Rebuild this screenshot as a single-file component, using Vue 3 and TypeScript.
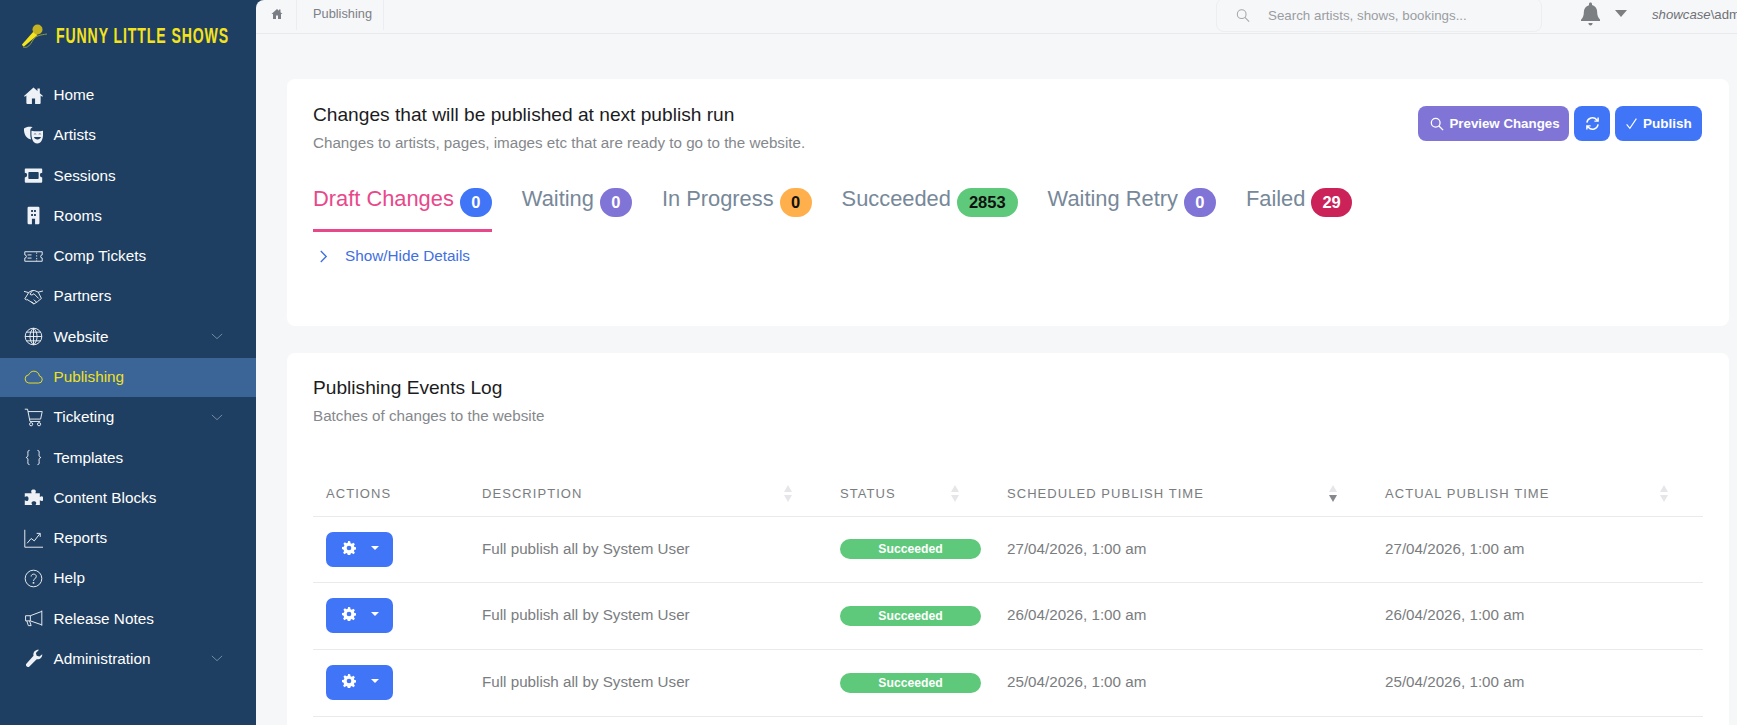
<template>
  <div class="shell">
    <aside class="sidebar">
      <div class="brand">
        <svg class="mic" viewBox="0 0 26 26" fill="none">
          <path d="M2 24 C7 25.5 9 22 12 17 C15 12.5 19 12 26 11" stroke="#a9ad3a" stroke-width="0.8" />
          <path d="M1 21.5 L12.5 8.5 L16.5 12 L3 23.5 Q1.5 23.5 1 21.5 Z" fill="#f4e51c" />
          <circle cx="16.5" cy="6.5" r="5" fill="#c4b322" />
        </svg>
        <span class="brand-name">FUNNY LITTLE SHOWS</span>
      </div>

      <nav class="nav">
        <a v-for="item in navItems" :key="item.label" class="nav-item" :class="{ active: item.active }">
          <svg class="nav-icon" viewBox="0 0 24 24" v-html="item.icon"></svg>
          <span class="nav-label">{{ item.label }}</span>
          <svg v-if="item.children" class="nav-chevron" viewBox="0 0 14 8" fill="none">
            <path d="M1 1l6 5.5L13 1" stroke="#7f97b0" stroke-width="1" />
          </svg>
        </a>
      </nav>
    </aside>

    <main class="main">
      <header class="topbar">
        <div class="crumbs">
          <span class="crumb crumb--home">
            <svg viewBox="0 0 24 24" width="12" height="12"><path fill="#7b7f85" d="M12 2 1 12h3v10h6v-7h4v7h6V12h3l-4-3.6V3h-3v2.7z" /></svg>
          </span>
          <span class="crumb">Publishing</span>
        </div>
        <div class="search">
          <svg viewBox="0 0 16 16" width="14" height="15" fill="none" stroke="#a4a7ab" stroke-width="1.2">
            <circle cx="6.5" cy="6.5" r="5" /><path d="M10.2 10.2 15 15" />
          </svg>
          <span class="search-text">Search artists, shows, bookings...</span>
        </div>
        <svg class="bell" viewBox="0 0 20 24"><path fill="#7b7f82" d="M10 0c1 0 1.6.7 1.6 1.7v.8c3.4.8 5.4 3.6 5.4 7.2 0 4.2 1 6 3 8v1.6H0V18c2-2 3-3.8 3-8 0-3.6 2-6.4 5.4-7.2v-.8C8.4.7 9 0 10 0zM7.8 21.5h4.4c0 1.5-1 2.5-2.2 2.5s-2.2-1-2.2-2.5z" /></svg>
        <span class="caret"></span>
        <span class="user"><i>showcase</i>\admin</span>
      </header>

      <div class="content">
        <section class="card card--changes">
          <div class="card-head">
            <div>
              <h2 class="card-title">Changes that will be published at next publish run</h2>
              <p class="card-sub">Changes to artists, pages, images etc that are ready to go to the website.</p>
            </div>
            <div class="toolbar">
              <button class="btn btn--purple">
                <svg viewBox="0 0 16 16" width="14" height="14" fill="none" stroke="#fff" stroke-width="1.5"><circle cx="6.5" cy="6.5" r="5" /><path d="M10.2 10.2 15 15" /></svg>
                Preview Changes
              </button>
              <button class="btn btn--blue btn--icon">
                <svg viewBox="0 0 16 16" width="15" height="15" fill="none" stroke="#fff" stroke-width="1.5">
                  <path d="M2 7a6 6 0 0 1 10.5-3L14 5.5M14 1.5v4h-4" />
                  <path d="M14 9a6 6 0 0 1-10.5 3L2 10.5M2 14.5v-4h4" />
                </svg>
              </button>
              <button class="btn btn--blue btn--publish">
                <svg viewBox="0 0 16 16" width="13" height="13" fill="none" stroke="#fff" stroke-width="1.4"><path d="M2 9l4 5L14 2" /></svg>
                Publish
              </button>
            </div>
          </div>

          <div class="tabs">
            <div v-for="tab in tabs" :key="tab.label" class="tab" :class="{ 'tab--active': tab.active }">
              <span class="tab-label">{{ tab.label }}</span>
              <span class="tab-badge" :class="tab.tone">{{ tab.count }}</span>
            </div>
          </div>

          <a class="toggle">
            <svg viewBox="0 0 10 14" width="9" height="13" fill="none" stroke="#3f6fe0" stroke-width="1.5"><path d="M2 1l6 6-6 6" /></svg>
            Show/Hide Details
          </a>
        </section>

        <section class="card card--log">
          <h2 class="card-title">Publishing Events Log</h2>
          <p class="card-sub">Batches of changes to the website</p>

          <table class="log">
            <colgroup>
              <col class="col-actions" />
              <col class="col-description" />
              <col class="col-status" />
              <col class="col-scheduled" />
              <col class="col-actual" />
            </colgroup>
            <thead>
              <tr>
                <th v-for="col in columns" :key="col.label">
                  <div class="th-inner">
                    <span>{{ col.label }}</span>
                    <span v-if="col.sort" class="sort" :class="{ 'sort--desc': col.sort === 'desc' }"></span>
                  </div>
                </th>
              </tr>
            </thead>
            <tbody>
              <tr v-for="row in rows" :key="row">
                <td>
                  <button class="row-btn">
                    <svg viewBox="0 0 24 24" width="14" height="14"><path fill="#fff" fill-rule="evenodd" d="M14 .5l.6 3.2a8.5 8.5 0 0 1 2.3 1l2.7-1.8 2.5 2.5-1.8 2.7c.4.7.8 1.5 1 2.3l3.2.6v3.4l-3.2.6a8.5 8.5 0 0 1-1 2.3l1.8 2.7-2.5 2.5-2.7-1.8a8.5 8.5 0 0 1-2.3 1l-.6 3.2h-4l-.6-3.2a8.5 8.5 0 0 1-2.3-1l-2.7 1.8-2.5-2.5 1.8-2.7a8.5 8.5 0 0 1-1-2.3L0 13.7v-3.4l3.2-.6c.2-.8.6-1.6 1-2.3L2.4 4.7l2.5-2.5 2.7 1.8a8.5 8.5 0 0 1 2.3-1l.6-3.2zM12 8a4 4 0 1 0 0 8 4 4 0 0 0 0-8z" /></svg>
                    <span class="row-caret"></span>
                  </button>
                </td>
                <td class="cell-text">Full publish all by System User</td>
                <td><span class="status">Succeeded</span></td>
                <td class="cell-text">{{ row }}, 1:00 am</td>
                <td class="cell-text">{{ row }}, 1:00 am</td>
              </tr>
            </tbody>
          </table>
        </section>
      </div>
    </main>
  </div>
</template>

<script setup lang="ts">
interface NavItem {
  label: string
  icon: string
  active?: boolean
  children?: boolean
}

const solid = (d: string) => `<path fill="#eef1f5" fill-rule="evenodd" d="${d}"/>`
const line = (d: string) => `<path fill="none" stroke="#eef1f5" stroke-width="1.2" d="${d}"/>`

const navItems: NavItem[] = [
  { label: 'Home', icon: solid('M12 2 0 12.5l1 1.2L3 12v9.5c0 .8.5 1.2 1.2 1.2H10v-7h4v7h5.8c.7 0 1.2-.4 1.2-1.2V12l2 1.7 1-1.2-4-3.5V3h-3v3.4z') },
  { label: 'Artists', icon: solid('M0 3c3-2 7-2.5 11-1.5C9 2 8 3.5 8 5.5v6c0 2 .3 4 1 5.5C3 16 -.5 10 0 3zM9.5 6c4 1 10 1 14.5 0 .5 6 0 16-7.2 16S9 12 9.5 6zM12 10.5c1-1.5 3-1.5 4 0zM18 10.5c1-1.5 3-1.5 4 0zM12.5 14c1 4 8 4 9 0z') },
  { label: 'Sessions', icon: solid('M2 3h20a1 1 0 0 1 1 1v4.5a3 3 0 0 0 0 6V20a1 1 0 0 1-1 1H2a1 1 0 0 1-1-1v-5.5a3 3 0 0 0 0-6V4a1 1 0 0 1 1-1zm4.5 4.5a1 1 0 0 0-1 1v7a1 1 0 0 0 1 1h11a1 1 0 0 0 1-1v-7a1 1 0 0 0-1-1z') },
  { label: 'Rooms', icon: solid('M6 1h12a1.5 1.5 0 0 1 1.5 1.5v19A1.5 1.5 0 0 1 18 23H6a1.5 1.5 0 0 1-1.5-1.5v-19A1.5 1.5 0 0 1 6 1zm3 4v2.5h2.3V5zm3.7 0v2.5H15V5zM9 10v2.5h2.3V10zm3.7 0v2.5H15V10zM10 16v7h4v-7z') },
  { label: 'Comp Tickets', icon: line('M1 6h22v4a2 2 0 0 0 0 4v4H1v-4a2 2 0 0 0 0-4zM4.5 10h5M4.5 14h5M16 7v1.5M16 10.5v1.5M16 14v1.5M16 17v1') },
  { label: 'Partners', icon: line('M0 5.5l5.5 1.5 4.5-2.5h3.5l4.5 2 6-1.5M6 7 1 15l2.5 1.5M18 6.5l4 8-5 4-4.5 3-5-3.5-4-2.5M10.5 5 7.5 9c1.5 1.8 3.5 1 5-.5l6 6M9.5 18.5l3 2.5M12.5 16l3.5 3.5') },
  { label: 'Website', children: true, icon: line('M12 1.5a10.5 10.5 0 1 0 0 21 10.5 10.5 0 0 0 0-21zM1.5 12h21M3 6.5h18M3 17.5h18M12 1.5v21M12 1.5c-6 5-6 16 0 21M12 1.5c6 5 6 16 0 21') },
  { label: 'Publishing', active: true, icon: '<path fill="none" stroke="#efe025" stroke-width="1.2" d="M6 19h12.5a4.5 4.5 0 0 0 1-8.9C19 6.5 16 4 12.5 4 9.5 4 7 6 6 8.5a5.3 5.3 0 0 0 0 10.5z"/>' },
  { label: 'Ticketing', children: true, icon: line('M1 1.5h3.5l3 15.5h13M5 4.5h18l-2 9.5H7') + '<circle cx="9" cy="20.5" r="2" fill="none" stroke="#eef1f5" stroke-width="1.2"/><circle cx="19" cy="20.5" r="2" fill="none" stroke="#eef1f5" stroke-width="1.2"/>' },
  { label: 'Templates', icon: line('M7 3C4 3 5 6 5 9c0 2-1 2.5-2.5 3C4 12.5 5 13 5 15c0 3-1 6 2 6M17 3c3 0 2 3 2 6 0 2 1 2.5 2.5 3-1.5.5-2.5 1-2.5 3 0 3 1 6-2 6') },
  { label: 'Content Blocks', icon: solid('M9 4c0-3 6-3 6 0 0 1-.6 1.5-.6 2.5H20v5c1-.5 1.5-1 2.5-1 2.5 0 2.5 6 0 6-1 0-1.5-.5-2.5-1v6h-5.5c.5-1 1-1.5 1-2.5 0-3-6-3-6 0 0 1 .5 1.5 1 2.5H1v-6c1 .5 1.5 1 2.5 1 3 0 3-6 0-6-1 0-1.5.5-2.5 1v-5h8.6C9.6 5.5 9 5 9 4z') },
  { label: 'Reports', icon: line('M1 1v22h23M4 18l5-6 4 3 7-9M16 5.5h4.5V10') },
  { label: 'Help', icon: line('M12 1.5a10.5 10.5 0 1 0 0 21 10.5 10.5 0 0 0 0-21zM9 9.5c0-4 6.5-4 6.5 0 0 3-3.5 2.5-3.5 5.5') + solid('M11 16.5h2v2h-2z') },
  { label: 'Release Notes', icon: line('M22.5 2v19M22.5 3 8 8.5H2v6.5h6L22.5 20M8 8.5V15M3.5 15l2 6h3.5l-2-6') },
  { label: 'Administration', children: true, icon: solid('M23 6.5c.3 3.5-2.5 7-7 6.5L6.5 22.5c-1.5 1.5-5.5-2-3.5-4L12 8.5C11 3.5 15 .5 19 1l-4 4 1 3.5 3.5 1z') },
]

const tabs = [
  { label: 'Draft Changes', count: '0', tone: 'tone-blue', active: true },
  { label: 'Waiting', count: '0', tone: 'tone-purple' },
  { label: 'In Progress', count: '0', tone: 'tone-orange' },
  { label: 'Succeeded', count: '2853', tone: 'tone-green' },
  { label: 'Waiting Retry', count: '0', tone: 'tone-purple' },
  { label: 'Failed', count: '29', tone: 'tone-red' },
]

const columns = [
  { label: 'ACTIONS', sort: '' },
  { label: 'DESCRIPTION', sort: 'none' },
  { label: 'STATUS', sort: 'none' },
  { label: 'SCHEDULED PUBLISH TIME', sort: 'desc' },
  { label: 'ACTUAL PUBLISH TIME', sort: 'none' },
]

const rows = ['27/04/2026', '26/04/2026', '25/04/2026']
</script>

<style>
html,
body {
  margin: 0;
  height: 100%;
  overflow: hidden;
}
</style>

<style scoped>
.shell {
  display: flex;
  width: 1737px;
  height: 725px;
  overflow: hidden;
  background: #1f3f62;
  font-family: "Liberation Sans", Arial, sans-serif;
}

.sidebar {
  flex: 0 0 256px;
  min-width: 0;
  overflow: hidden;
  color: #fff;
}

.brand {
  display: flex;
  align-items: center;
  gap: 9px;
  height: 36px;
  padding: 18px 0 0 21px;
  white-space: nowrap;
}

.mic {
  flex: none;
  width: 26px;
  height: 26px;
}

.brand-name {
  display: inline-block;
  font-weight: 700;
  font-size: 22px;
  letter-spacing: 1.4px;
  color: #f4e31c;
  transform: scaleX(0.64);
  transform-origin: left center;
}

.nav {
  margin-top: 21px;
}

.nav-item {
  display: flex;
  align-items: center;
  height: 40.27px;
  padding: 0 33px 0 24px;
  font-size: 15.3px;
}

.nav-icon {
  width: 19px;
  height: 19px;
  margin-right: 10.5px;
  flex: none;
}

.nav-label {
  flex: 1;
}

.nav-chevron {
  width: 12px;
  height: 7px;
}

.nav-item.active {
  height: 39.47px;
  margin-top: 0.8px;
  background: #3a6596;
  color: #efe025;
}

.main {
  flex: 1;
  min-width: 0;
  overflow: hidden;
  background: #f6f7f9;
  border-top-left-radius: 8px;
}

.topbar {
  display: flex;
  align-items: center;
  height: 33px;
  border-bottom: 1px solid #e8eaed;
  white-space: nowrap;
}

.crumbs {
  display: flex;
  flex: none;
  width: 960px;
  height: 100%;
}

.crumb {
  display: flex;
  align-items: center;
  height: 30px;
  padding: 0 11px 3px 16px;
  box-sizing: border-box;
  border-right: 1px solid #ebedf0;
  font-size: 12.8px;
  color: #7d8086;
}

.crumb--home {
  padding: 0 13px 3px 15px;
}

.search {
  display: flex;
  flex: none;
  align-items: center;
  gap: 18px;
  box-sizing: border-box;
  width: 326px;
  height: 34px;
  margin-top: -3px;
  padding-left: 19px;
  border: 1px solid #eceef0;
  border-radius: 8px;
  font-size: 13.35px;
  color: #9a9da1;
}

.bell {
  flex: none;
  width: 19px;
  height: 24px;
  margin: -5px 0 0 39px;
}

.caret {
  flex: none;
  width: 0;
  height: 0;
  margin: -6px 0 0 15px;
  border-left: 6px solid transparent;
  border-right: 6px solid transparent;
  border-top: 7px solid #7b7f82;
}

.user {
  flex: none;
  margin: -5px 0 0 25px;
  font-size: 13.2px;
  color: #6e7175;
}

.content {
  display: flex;
  flex-direction: column;
  gap: 27px;
  padding: 45px 8px 0 31px;
}

.card {
  box-sizing: border-box;
  padding: 25px 27px 0 26px;
  background: #fff;
  border-radius: 8px;
}

.card--changes {
  height: 247px;
}

.card--log {
  height: 400px;
  padding-top: 24px;
}

.card-head {
  display: flex;
  justify-content: space-between;
}

.card-title {
  margin: 0;
  font-size: 19.15px;
  font-weight: 400;
  line-height: 22px;
  color: #1b1c1e;
}

.card-sub {
  margin: 8px 0 0;
  font-size: 15.2px;
  line-height: 18px;
  color: #85888c;
}

.toolbar {
  display: flex;
  gap: 5px;
  margin-top: 2px;
}

.btn {
  display: inline-flex;
  align-items: center;
  justify-content: center;
  gap: 5px;
  height: 35px;
  padding: 0;
  border: 0;
  border-radius: 8px;
  color: #fff;
  font-family: inherit;
  font-size: 13.5px;
  font-weight: 700;
  white-space: nowrap;
}

.btn--purple {
  width: 151px;
  padding-left: 3px;
  font-size: 13.3px;
  background: #8075d6;
}

.btn--blue {
  background: #4075f8;
}

.btn--icon {
  width: 36px;
}

.btn--publish {
  width: 87px;
}

.tabs {
  display: flex;
  gap: 30px;
  margin-top: 29px;
}

.tab {
  display: flex;
  align-items: center;
  gap: 6px;
  height: 43px;
  padding-bottom: 5px;
  font-size: 21.85px;
  color: #778899;
  border-bottom: 3px solid transparent;
}

.tab--active {
  color: #e8488a;
  border-bottom-color: #e8488a;
}

.tab-label {
  padding-bottom: 7px;
}

.tab-badge {
  display: flex;
  align-items: center;
  justify-content: center;
  box-sizing: border-box;
  min-width: 32px;
  height: 29px;
  padding: 0 11px;
  border-radius: 15px;
  font-size: 16.5px;
  font-weight: 700;
  color: #fff;
}

.tone-blue {
  background: #4075f8;
}

.tone-purple {
  background: #8075d6;
}

.tone-orange {
  background: #ffb04c;
  color: #111;
}

.tone-green {
  padding: 0 12px;
  background: #5ec97b;
  color: #111;
}

.tone-red {
  background: #cb2359;
}

.toggle {
  display: flex;
  align-items: center;
  gap: 17px;
  margin: 15px 0 0 6px;
  font-size: 15.3px;
  color: #3f6fe0;
}

.log {
  width: 1390px;
  margin-top: 36px;
  border-collapse: collapse;
  table-layout: fixed;
  font-size: 15.2px;
  color: #7a7d80;
}

.col-actions {
  width: 156px;
}

.col-description {
  width: 358px;
}

.col-status {
  width: 167px;
}

.col-scheduled {
  width: 378px;
}

.col-actual {
  width: 331px;
}

.log th {
  box-sizing: border-box;
  height: 55px;
  padding: 11px 13px 0;
  border-bottom: 1px solid #e8eaec;
  font-size: 13px;
  font-weight: 400;
  letter-spacing: 1.05px;
  text-align: left;
  color: #7a7d80;
}

.th-inner {
  display: flex;
  align-items: center;
  justify-content: space-between;
  padding-right: 22px;
}

.log td {
  box-sizing: border-box;
  height: 67px;
  padding: 0 13px;
  border-bottom: 1px solid #e8eaec;
}

.log tbody tr:first-child td {
  height: 66px;
}

.log td.cell-text {
  padding-bottom: 2px;
}

.sort {
  position: relative;
  width: 8px;
  height: 17px;
}

.sort::before,
.sort::after {
  content: "";
  position: absolute;
  left: 0;
  border-left: 4px solid transparent;
  border-right: 4px solid transparent;
}

.sort::before {
  top: 0;
  border-bottom: 7px solid #e4e6e9;
}

.sort::after {
  bottom: 0;
  border-top: 7px solid #e4e6e9;
}

.sort--desc::after {
  border-top-color: #85888c;
}

.row-btn {
  display: flex;
  align-items: center;
  box-sizing: border-box;
  width: 67px;
  height: 35px;
  padding: 0 0 3px 16px;
  border: 0;
  border-radius: 7px;
  background: #4075f8;
}

.row-caret {
  margin-left: 15px;
  border-left: 4px solid transparent;
  border-right: 4px solid transparent;
  border-top: 4px solid #fff;
}

.status {
  display: block;
  width: 141px;
  height: 20px;
  border-radius: 10px;
  background: #5ec97b;
  color: #fff;
  font-size: 12.2px;
  font-weight: 700;
  line-height: 20px;
  text-align: center;
}
</style>
